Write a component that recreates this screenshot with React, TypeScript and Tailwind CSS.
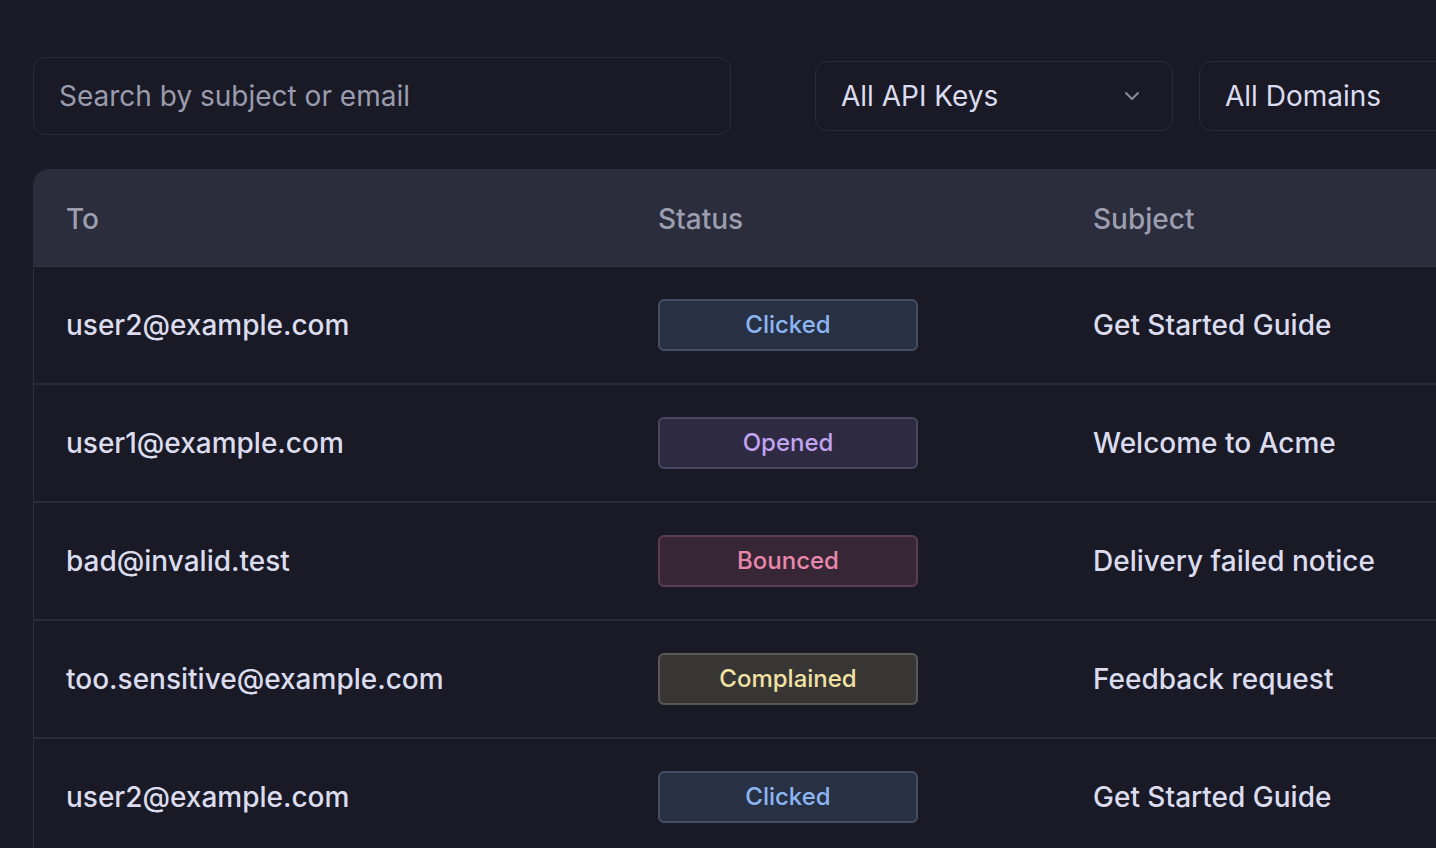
import { ChevronDown } from "lucide-react"

const rows = [
  { to: "user2@example.com", status: "Clicked", subject: "Get Started Guide" },
  { to: "user1@example.com", status: "Opened", subject: "Welcome to Acme" },
  { to: "bad@invalid.test", status: "Bounced", subject: "Delivery failed notice" },
  { to: "too.sensitive@example.com", status: "Complained", subject: "Feedback request" },
  { to: "user2@example.com", status: "Clicked", subject: "Get Started Guide" },
]

const badgeStyles: Record<string, string> = {
  Clicked: "bg-[#283044] border-[#454d63] text-[#8cb6f2]",
  Opened: "bg-[#2d2a42] border-[#4a4560] text-[#c3a3ef]",
  Bounced: "bg-[#372635] border-[#5c3d52] text-[#e887ac]",
  Complained: "bg-[#383634] border-[#5a5856] text-[#f1e2a4]",
}

const App = () => {
  return (
    <div className="w-full h-screen overflow-hidden bg-[#191a26] font-['Inter',sans-serif] antialiased">
      <div className="w-[1600px] pl-[33px] pt-[57px]">
        <div className="flex items-center">
          <div className="w-[698px] h-[78px] rounded-xl border border-[#2a2b38] flex items-center px-[25px]">
            <input
              placeholder="Search by subject or email"
              className="w-full bg-transparent outline-0 text-[28px] text-[#dcdcf0] placeholder:text-[#9a9cad]"
            />
          </div>
          <div className="ml-[84px] w-[358px] h-[70px] rounded-xl border border-[#2a2b38] flex items-center justify-between pl-[25px] pr-[28px]">
            <span className="text-[28px] text-[#dcdcf0]">All API Keys</span>
            <ChevronDown className="w-6 h-6 text-[#8a8b99]" strokeWidth={2} />
          </div>
          <div className="ml-[26px] w-[358px] h-[70px] rounded-xl border border-[#2a2b38] flex items-center pl-[25px]">
            <span className="text-[28px] text-[#dcdcf0]">All Domains</span>
          </div>
        </div>

        <div className="mt-[34px] rounded-tl-2xl border-l border-t border-[#2e2f3d] overflow-hidden">
          <div className="flex h-[97px] pt-[1px] items-center bg-[#2b2c3c] border-b border-[#353645] text-[28px] font-medium text-[#9c9eb0]">
            <div className="w-[592px] pl-[32px]">To</div>
            <div className="w-[435px] pl-[32px]">Status</div>
            <div className="flex-1 pl-[32px]">Subject</div>
          </div>
          {rows.map((r, i) => (
            <div key={i} className="flex h-[118px] items-center border-b-2 border-[#2a2b38] text-[28px] font-medium text-[#dcdcef]">
              <div className="w-[592px] pl-[32px]">{r.to}</div>
              <div className="w-[435px] pl-[32px]">
                <div className={`w-[260px] h-[52px] rounded-md border-2 flex items-center justify-center text-[24px] font-medium ${badgeStyles[r.status]}`}>
                  {r.status}
                </div>
              </div>
              <div className="flex-1 pl-[32px]">{r.subject}</div>
            </div>
          ))}
        </div>
      </div>
    </div>
  )
}

export default App
